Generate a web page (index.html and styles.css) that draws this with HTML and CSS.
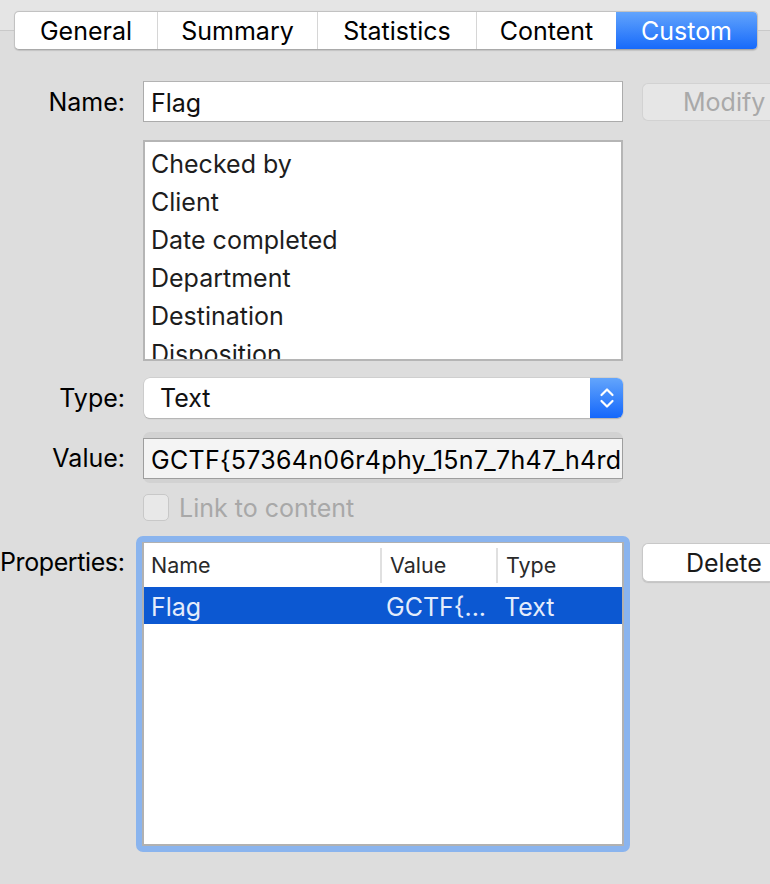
FILE: index.html
```html
<!DOCTYPE html>
<html>
<head>
<meta charset="utf-8">
<link rel="stylesheet" href="styles.css">
</head>
<body>
<div class="window">
  <div class="tabbar">
    <div class="tabline"></div>
    <div class="tabs">
      <div class="tab t-general">General</div>
      <div class="tab t-summary">Summary</div>
      <div class="tab t-stats">Statistics</div>
      <div class="tab t-content">Content</div>
      <div class="tab t-custom active">Custom</div>
    </div>
    <div class="tabline grow"></div>
  </div>

  <div class="form">
    <div class="lbl row-name">Name:</div>
    <div class="textfield row-name">Flag</div>
    <div class="btn disabled row-name">Modify</div>

    <div class="namelist row-list">
      <div class="item">Checked by</div>
      <div class="item">Client</div>
      <div class="item">Date completed</div>
      <div class="item">Department</div>
      <div class="item">Destination</div>
      <div class="item">Disposition</div>
    </div>

    <div class="lbl row-type">Type:</div>
    <div class="popup row-type">
      <span class="popup-text">Text</span>
      <span class="popup-arrows">
        <svg width="16" height="24" viewBox="0 0 16 24"><path d="M2.5 9 L8 3.5 L13.5 9" fill="none" stroke="#fff" stroke-width="2.2" stroke-linecap="round" stroke-linejoin="round"/><path d="M2.5 15 L8 20.5 L13.5 15" fill="none" stroke="#fff" stroke-width="2.2" stroke-linecap="round" stroke-linejoin="round"/></svg>
      </span>
    </div>

    <div class="lbl row-value">Value:</div>
    <div class="valuering row-value">
      <div class="valuefield">GCTF{57364n06r4phy_15n7_7h47_h4rd</div>
    </div>

    <div class="check row-check">
      <span class="box"></span>
      <span class="check-text">Link to content</span>
    </div>

    <div class="lbl props-lbl">Properties:</div>
    <div class="tablering">
      <div class="table">
        <div class="thead">
          <div class="th c1">Name</div>
          <div class="th c2">Value</div>
          <div class="th c3">Type</div>
        </div>
        <div class="tr selected">
          <div class="td c1">Flag</div>
          <div class="td c2">GCTF{...</div>
          <div class="td c3">Text</div>
        </div>
      </div>
    </div>
    <div class="btn delete">Delete</div>
  </div>
</div>
</body>
</html>
```

FILE: styles.css
```css
html, body {
  margin: 0;
  padding: 0;
  background: #dddddd;
  overflow: hidden;
}
.window {
  width: 770px;
  height: 884px;
  font-family: Inter, "Noto Sans", "Liberation Sans", sans-serif;
  font-size: 25px;
  color: #111;
  background: linear-gradient(#e5e5e5 0, #e5e5e5 30px, #dddddd 31px);
}
.tabbar {
  display: flex;
  align-items: center;
  padding-top: 11px;
  height: 39px;
}
.tabline {
  width: 14px;
  height: 1px;
  background: #c9c9c9;
}
.tabline.grow { flex: 1; }
.tabs {
  display: flex;
  height: 39px;
  box-sizing: border-box;
  border: 1px solid #c2c2c2;
  border-bottom-color: #a9a9a9;
  border-radius: 5px;
  background: #fff;
  box-shadow: 0 0.5px 1px rgba(0,0,0,0.12);
  overflow: hidden;
}
.tab {
  display: flex;
  align-items: center;
  justify-content: center;
  border-left: 1px solid #d6d6d6;
  color: #000;
  box-sizing: border-box;
}
.tab.t-general { width: 142px; border-left: none; }
.tab.t-summary { width: 160px; }
.tab.t-stats { width: 159px; }
.tab.t-content { width: 140px; }
.tab.t-custom { width: 141px; border-left: none; }
.tab.active {
  background: linear-gradient(#62a4fc, #176afb);
  color: #fff;
}

.form {
  display: grid;
  grid-template-columns: 125px 480px 1fr;
  column-gap: 18px;
  margin-top: 31px;
}
.lbl {
  grid-column: 1;
  text-align: right;
  white-space: nowrap;
  color: #000;
  display: flex;
  align-items: center;
  justify-content: flex-end;
}
.textfield {
  grid-column: 2;
  height: 41px;
  box-sizing: border-box;
  border: 1px solid #ababab;
  border-top-color: #b3b3b3;
  background: #fff;
  padding-left: 7px;
  padding-top: 2px;
  display: flex;
  align-items: center;
}
.btn {
  grid-column: 3;
  margin-left: 1px;
  box-sizing: border-box;
  border: 1px solid #c6c6c6;
  border-right: none;
  border-radius: 6px 0 0 6px;
  background: #fff;
  display: flex;
  align-items: center;
  white-space: nowrap;
}
.btn.disabled {
  background: #e6e6e6;
  border-color: #d2d2d2;
  color: #a9a9a9;
  height: 38px;
  margin-top: 2px;
  padding-left: 40px;
}
.btn.delete {
  height: 39px;
  margin-top: 22px;
  align-self: start;
  color: #1a1a1a;
  padding-left: 43px;
  box-shadow: 0 1px 1px rgba(0,0,0,0.12);
  border-color: #c8c8c8;
}

.namelist {
  grid-column: 2;
  margin-top: 18px;
  height: 221px;
  box-sizing: border-box;
  border: 2px solid #b5b5b5;
  background: #fff;
  overflow: hidden;
  padding-top: 3px;
}
.item {
  height: 38px;
  line-height: 38px;
  padding-left: 6px;
  color: #1d1d1d;
}

.row-type { margin-top: 17px; }
.popup {
  grid-column: 2;
  height: 40px;
  box-sizing: border-box;
  border-radius: 6px;
  background: #fff;
  box-shadow: 0 0 0 0.5px #c2c2c2, 0 1px 1px rgba(0,0,0,0.25);
  display: flex;
  align-items: center;
  overflow: hidden;
  margin-left: 1px;
}
.popup-text {
  flex: 1;
  padding-left: 16px;
}
.popup-arrows {
  width: 33px;
  height: 40px;
  background: linear-gradient(#63a5fc, #1467fb);
  display: flex;
  align-items: center;
  justify-content: center;
}

.row-value { margin-top: 14px; }
.valuering {
  grid-column: 2;
  height: 51px;
  box-sizing: border-box;
  border-radius: 7px;
  background: #d2d2d2;
  padding: 6px 0 4px 0;
}
.valuefield {
  height: 41px;
  box-sizing: border-box;
  border: 1px solid #9e9e9e;
  background: #f4f4f4;
  padding-left: 7px;
  padding-top: 3px;
  display: flex;
  align-items: center;
  white-space: nowrap;
  overflow: hidden;
  color: #000;
  letter-spacing: 0.28px;
}

.check {
  grid-column: 2;
  margin-top: 11px;
  display: flex;
  align-items: center;
  height: 27px;
  color: #a8a8a8;
}
.box {
  width: 26px;
  height: 27px;
  box-sizing: border-box;
  border: 1px solid #c8c8c8;
  border-radius: 5px;
  background: #e8e8e8;
  margin-right: 10px;
}

.props-lbl {
  margin-top: 15px;
  align-items: flex-start;
  padding-top: 11px;
  justify-content: flex-start;
  letter-spacing: -0.4px;
}
.tablering {
  grid-column: 2;
  margin-top: 15px;
  margin-left: -7px;
  margin-right: -7px;
  height: 316px;
  box-sizing: border-box;
  border: 6px solid #8ab4ee;
  border-radius: 7px;
  background: #8ab4ee;
}
.table {
  height: 100%;
  box-sizing: border-box;
  border: 1px solid #b1b1b1;
  border-width: 1px 2px 2px 2px;
  background: #fff;
}
.thead {
  display: flex;
  height: 44px;
  align-items: center;
}
.th {
  color: #2a2a2a;
  font-size: 21.5px;
  height: 35px;
  display: flex;
  align-items: center;
  box-sizing: border-box;
}
.th.c2, .th.c3 { border-left: 2px solid #e0e0e0; }
.c1 { width: 236px; padding-left: 7px; box-sizing: border-box; }
.c2 { width: 116px; padding-left: 8px; box-sizing: border-box; }
.c3 { flex: 1; padding-left: 8px; box-sizing: border-box; }
.tr {
  display: flex;
  height: 37px;
  align-items: center;
  padding-top: 2px;
  box-sizing: border-box;
}
.tr.selected {
  background: #0c58d2;
  color: #e4ecfb;
}
.td.c2 { padding-left: 6px; }
.td.c3 { padding-left: 8px; }
```
